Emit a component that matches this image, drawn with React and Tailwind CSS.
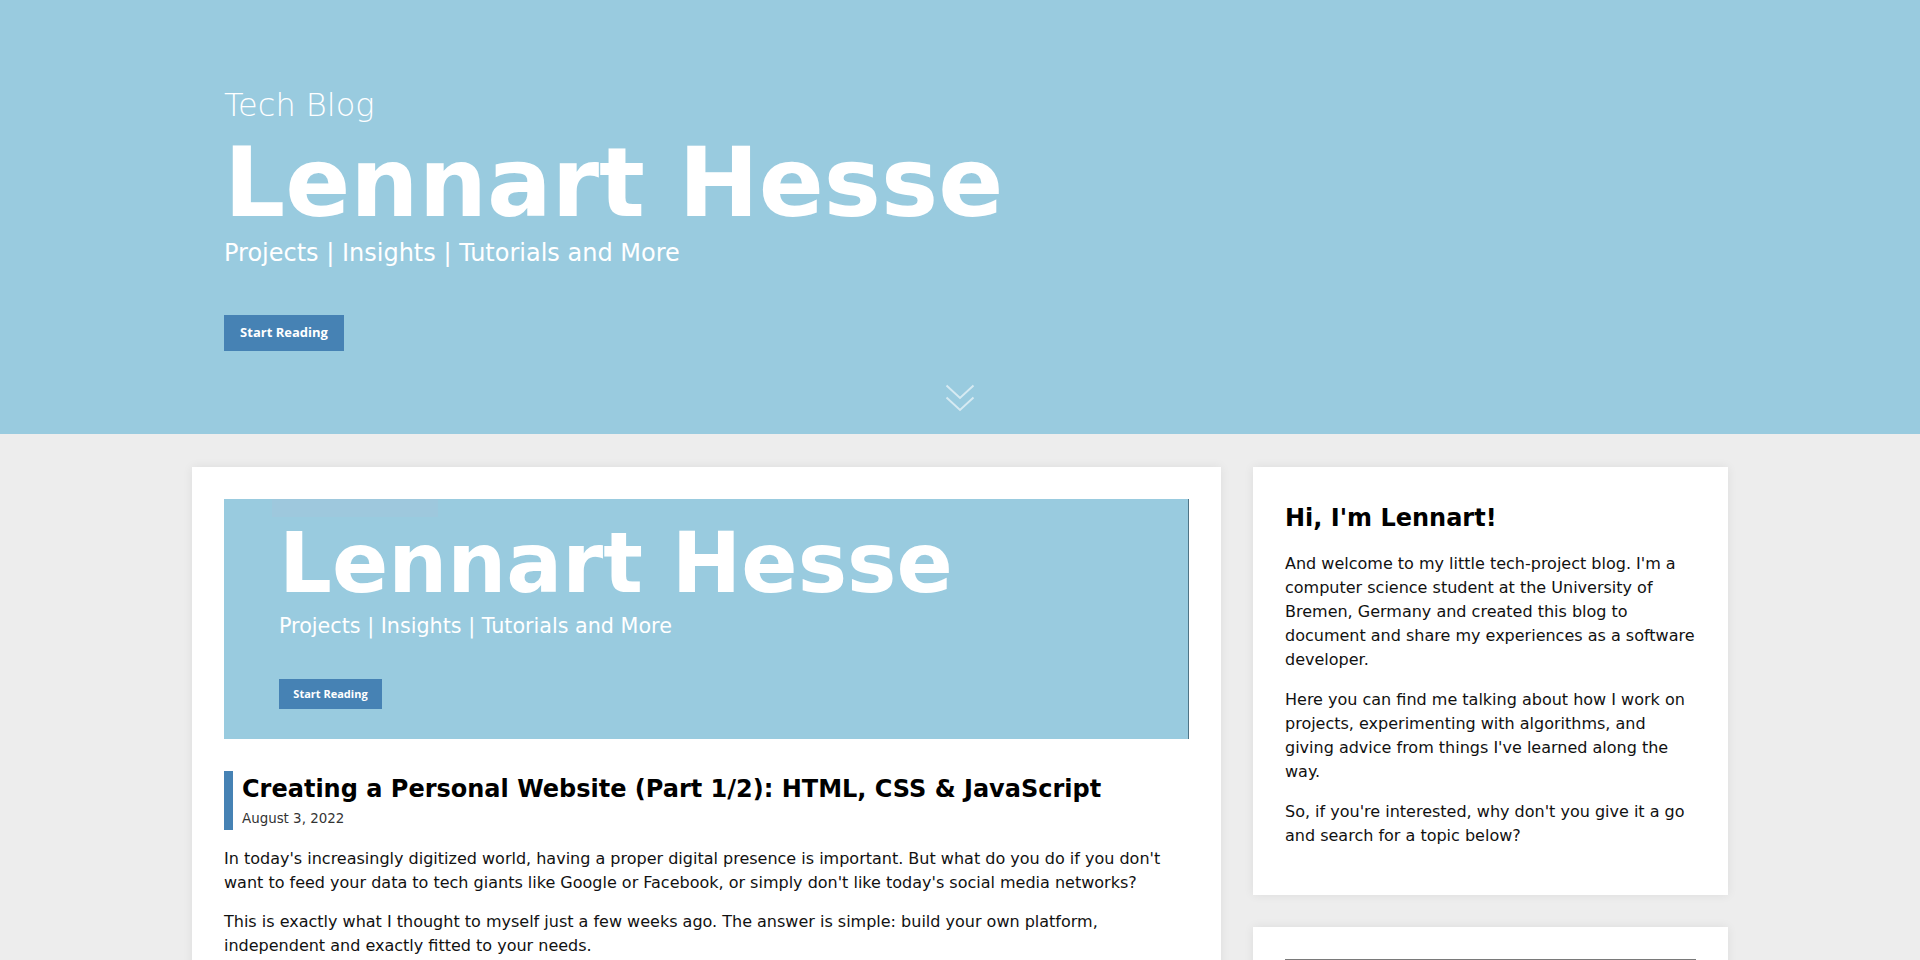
import React from "react";

function Chevrons({ className }) {
  return (
    <svg className={className} width="30" height="29" viewBox="0 0 30 29" fill="none">
      <path d="M1.5 1.5 L15 14 L28.5 1.5" stroke="white" strokeOpacity="0.6" strokeWidth="2" />
      <path d="M1.5 13.5 L15 26 L28.5 13.5" stroke="white" strokeOpacity="0.6" strokeWidth="2" />
    </svg>
  );
}

function Hero() {
  return (
    <header className="bg-[#99cbdf] h-[434px] flex flex-col">
      <div className="pl-[224px] pt-[87px] flex flex-col items-start text-white">
        <div className="text-[32px] leading-[36px] font-extralight">Tech Blog</div>
        <h1 className="mt-[10px] text-[96px] leading-[100px] font-bold">Lennart Hesse</h1>
        <div className="mt-[4px] text-[24px] leading-[32px]">Projects | Insights | Tutorials and More</div>
        <button className="mt-[46px] w-[120px] h-[36px] bg-[#4682b4] text-white text-[13px] font-bold font-['Open_Sans',sans-serif]">
          Start Reading
        </button>
      </div>
      <div className="mt-[33px] flex justify-center">
        <Chevrons className="" />
      </div>
    </header>
  );
}

function PreviewImage() {
  return (
    <div className="relative h-[240px] bg-[#99cbdf] border-r border-[#4f7487] text-white pl-[55px] flex flex-col items-start">
      <div className="absolute left-[48px] top-0 w-[166px] h-[18px] bg-[#a2c6dc] opacity-60"></div>
      <div className="mt-[22px] text-[83px] leading-[86px] font-bold">Lennart Hesse</div>
      <div className="mt-[5px] text-[20.7px] leading-[28px]">Projects | Insights | Tutorials and More</div>
      <div className="mt-[39px] w-[103px] h-[30px] bg-[#4682b4] flex items-center justify-center text-[11px] font-bold font-['Open_Sans',sans-serif]">
        Start Reading
      </div>
    </div>
  );
}

export default function App() {
  return (
    <div className="min-h-screen bg-[#ededed] font-['DejaVu_Sans',sans-serif] text-[#111]">
      <Hero />
      <main className="pt-[33px] px-[192px] grid grid-cols-[1029px_475px] gap-[32px] items-start">
        <article className="bg-white p-[32px] shadow-[0_0_10px_rgba(0,0,0,0.07)]">
          <PreviewImage />
          <div className="mt-[32px] border-l-[9px] border-[#4682b4] pl-[9px]">
            <h2 className="text-[24px] leading-[36px] font-bold text-black">
              Creating a Personal Website (Part 1/2): HTML, CSS &amp; JavaScript
            </h2>
            <div className="pt-[1px] text-[13.4px] leading-[22px] text-[#333]">August 3, 2022</div>
          </div>
          <p className="mt-[17px] text-[16px] leading-[24px]">
            In today's increasingly digitized world, having a proper digital presence is important. But what do you do if you don't want to feed your data to tech giants like Google or Facebook, or simply don't like today's social media networks?
          </p>
          <p className="mt-[15px] text-[16px] leading-[24px]">
            This is exactly what I thought to myself just a few weeks ago. The answer is simple: build your own platform, independent and exactly fitted to your needs.
          </p>
        </article>
        <aside className="flex flex-col gap-[32px]">
          <section className="bg-white pt-[33px] px-[32px] pb-[32px] shadow-[0_0_10px_rgba(0,0,0,0.07)]">
            <h2 className="text-[24px] leading-[36px] font-bold text-black">Hi, I'm Lennart!</h2>
            <p className="mt-[16px] text-[16px] leading-[24px]">
              And welcome to my little tech-project blog. I'm a computer science student at the University of Bremen, Germany and created this blog to document and share my experiences as a software developer.
            </p>
            <p className="mt-[16px] text-[16px] leading-[24px]">
              Here you can find me talking about how I work on projects, experimenting with algorithms, and giving advice from things I've learned along the way.
            </p>
            <p className="mt-[16px] mb-[15px] text-[16px] leading-[24px]">
              So, if you're interested, why don't you give it a go and search for a topic below?
            </p>
          </section>
          <section className="bg-white p-[32px] shadow-[0_0_10px_rgba(0,0,0,0.07)]">
            <input
              type="text"
              className="w-full h-[40px] border border-[#7a7a7a] px-3 text-[16px] outline-none"
            />
          </section>
        </aside>
      </main>
    </div>
  );
}
